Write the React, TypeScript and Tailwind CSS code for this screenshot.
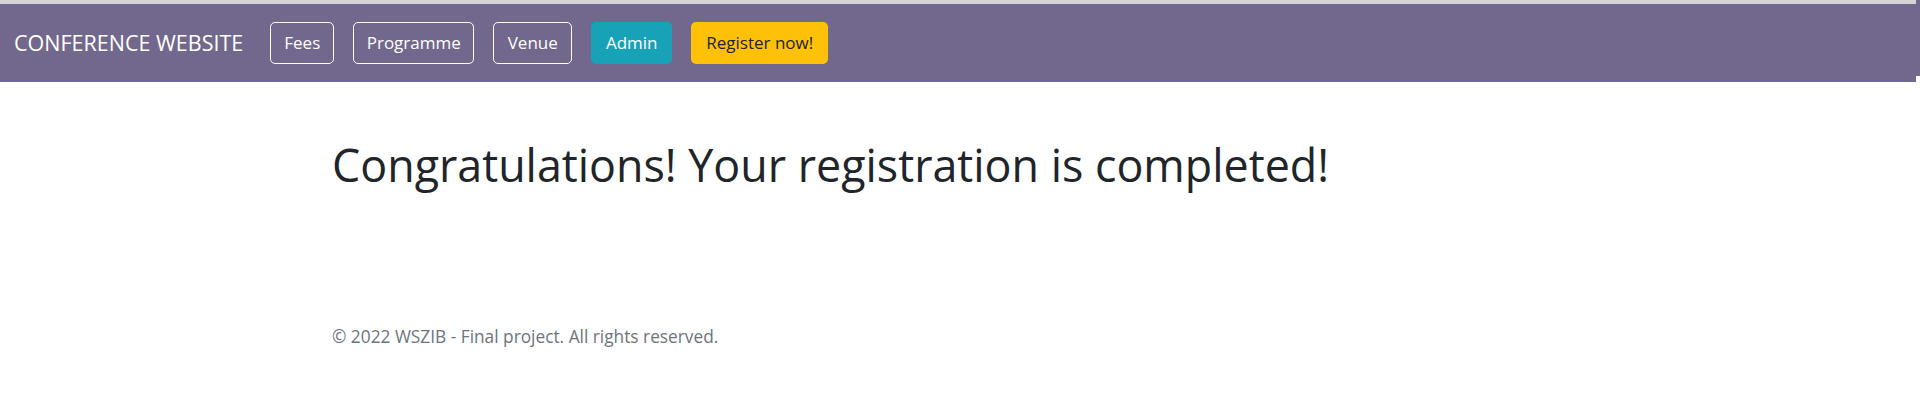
export default function App() {
  const font = { fontFamily: '"Open Sans", "Noto Sans", sans-serif' };
  return (
    <div className="min-h-[403px] bg-white" style={font}>
      <div className="flex">
        <div className="flex-1">
          <div className="h-[4px] bg-[#d4d4d4]" />
          <nav className="flex h-[78px] items-center bg-[#72688e] pl-[14px]">
            <a className="mr-[27px] text-[21.5px] text-white">CONFERENCE WEBSITE</a>
            <div className="flex gap-[19px]">
              <button className="h-[42px] w-[64px] rounded-[5px] border border-white text-[17px] text-white">Fees</button>
              <button className="h-[42px] w-[121px] rounded-[5px] border border-white text-[17px] text-white">Programme</button>
              <button className="h-[42px] w-[79px] rounded-[5px] border border-white text-[17px] text-white">Venue</button>
              <button className="h-[42px] w-[81px] rounded-[5px] bg-[#17a2b8] text-[17px] text-white">Admin</button>
              <button className="h-[42px] w-[137px] rounded-[5px] bg-[#ffc107] text-[17px] text-[#212529]">Register now!</button>
            </div>
          </nav>
        </div>
        <div className="h-[76px] w-[4px] bg-[#72688e]" />
      </div>

      <main className="pl-[332px]">
        <h1 className="pt-[56px] text-[44.8px] leading-[1.2] font-normal text-[#212529]">
          Congratulations! Your registration is completed!
        </h1>
        <footer className="pt-[132px] text-[17.3px] text-[#6c757d]">
          © 2022 WSZIB - Final project. All rights reserved.
        </footer>
      </main>
    </div>
  );
}
